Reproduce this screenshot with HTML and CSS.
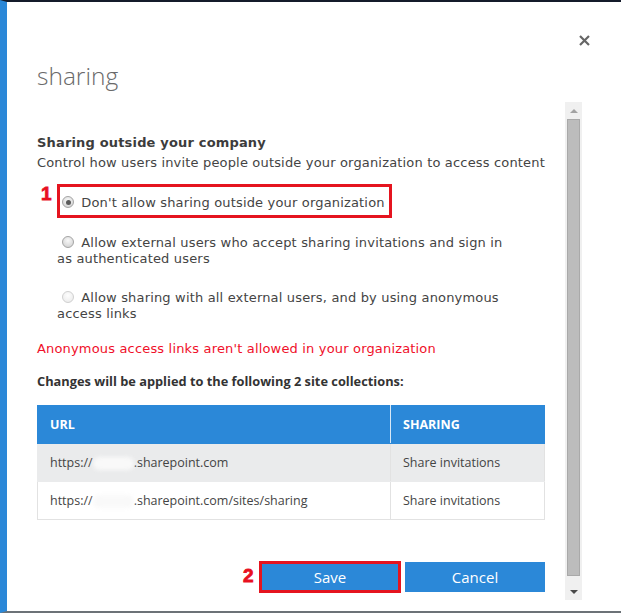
FILE: index.html
```html
<!DOCTYPE html>
<html lang="en">
<head>
<meta charset="utf-8">
<title>sharing</title>
<link rel="stylesheet" href="styles.css">
</head>
<body>
<div class="window">
  <div class="titlebar">
    <h1 class="title">sharing</h1>
    <button class="close" aria-label="Close">
      <svg width="11" height="11" viewBox="0 0 11 11"><path d="M1 1L10 10M10 1L1 10" stroke="#666" stroke-width="2.2" fill="none"/></svg>
    </button>
  </div>
  <div class="body">
    <div class="content">
      <h2 class="section-title">Sharing outside your company</h2>
      <p class="section-desc">Control how users invite people outside your organization to access content</p>

      <label class="option opt1">
        <span class="marker marker-1">1</span>
        <span class="highlight"></span>
        <span class="radio checked"></span> Don't allow sharing outside your organization
      </label>
      <label class="option opt2">
        <span class="radio"></span> Allow external users who accept sharing invitations and sign in as authenticated users
      </label>
      <label class="option opt3">
        <span class="radio disabled"></span> Allow sharing with all external users, and by using anonymous access links
      </label>

      <p class="error">Anonymous access links aren't allowed in your organization</p>
      <p class="changes">Changes will be applied to the following 2 site collections:</p>

      <table class="sites">
        <thead>
          <tr><th class="col-url">URL</th><th>SHARING</th></tr>
        </thead>
        <tbody>
          <tr class="alt"><td>https://<span class="blur"></span>.sharepoint.com</td><td>Share invitations</td></tr>
          <tr><td>https://<span class="blur"></span>.sharepoint.com/sites/sharing</td><td>Share invitations</td></tr>
        </tbody>
      </table>

      <div class="actions">
        <span class="save-wrap">
          <span class="marker marker-2">2</span>
          <button class="btn save">Save</button>
        </span>
        <button class="btn">Cancel</button>
      </div>
    </div>
    <div class="scrollbar">
      <div class="sb-btn"><span class="tri-up"></span></div>
      <div class="thumb"></div>
      <div class="sb-space"></div>
      <div class="sb-btn"><span class="tri-down"></span></div>
    </div>
  </div>
</div>
</body>
</html>
```
FILE: styles.css
```css
* { box-sizing: border-box; }
html, body { margin: 0; padding: 0; }
body {
  width: 621px;
  height: 613px;
  overflow: hidden;
  background: #fff;
  font-family: "DejaVu Sans", Verdana, sans-serif;
  color: #444;
}
.window {
  height: 613px;
  border-top: 2px solid #141b2a;
  border-left: 7px solid #2b88d8;
  border-bottom: 2px solid #6c7277;
  display: flex;
  flex-direction: column;
}
.titlebar {
  height: 100px;
  flex: none;
  display: flex;
  justify-content: space-between;
  align-items: flex-start;
  padding-left: 30px;
  padding-right: 27px;
}
.title {
  margin: 57px 0 0;
  font-family: "Open Sans", sans-serif;
  font-weight: 300;
  font-size: 24.5px;
  line-height: 34px;
  color: #6a6a6a;
}
.close {
  margin-top: 28px;
  width: 20px;
  height: 20px;
  padding: 0;
  border: 0;
  background: none;
  display: flex;
  align-items: center;
  justify-content: center;
}
.body {
  display: flex;
  flex: 1;
  align-items: flex-start;
}
.content {
  width: 538px;
  padding-left: 30px;
  padding-top: 32px;
  letter-spacing: 0.17px;
}
.section-title {
  margin: 0;
  font-size: 13px;
  font-weight: bold;
  line-height: 18px;
  color: #3c3c3c;
}
.section-desc {
  margin: 2px 0 0;
  font-size: 13px;
  line-height: 18px;
  white-space: nowrap;
}
.option {
  display: block;
  position: relative;
  margin-left: 20px;
  margin-right: 26px;
  font-size: 13px;
  line-height: 16px;
}
.opt1 { margin-top: 21px; }
.opt2 { margin-top: 22px; }
.opt3 { margin-top: 21px; }
.radio {
  display: inline-block;
  width: 12px;
  height: 12px;
  margin: 3px 3px 0 5px;
  vertical-align: -1px;
  border-radius: 50%;
  border: 1px solid #a4a4a4;
  background: radial-gradient(circle at 50% 35%, #f8f8f8 0%, #dedede 60%, #cbcbcb 100%);
  position: relative;
}
.radio.checked::after {
  content: "";
  position: absolute;
  left: 2.5px;
  top: 2.5px;
  width: 5px;
  height: 5px;
  border-radius: 50%;
  background: #5a5a5a;
}
.radio.disabled {
  border-color: #d0d0d0;
  background: radial-gradient(circle at 50% 35%, #fdfdfd 0%, #efefef 70%, #e6e6e6 100%);
}
.marker {
  position: absolute;
  font-family: "Liberation Sans", Arial, sans-serif;
  font-weight: bold;
  font-size: 19px;
  line-height: 20px;
  letter-spacing: 0;
  color: #e8101f;
  -webkit-text-stroke: 0.8px #e8101f;
}
.marker-1 { left: -16px; top: -9px; }
.highlight {
  position: absolute;
  left: 0;
  top: -9px;
  width: 335px;
  height: 34px;
  border: 3px solid #e5141f;
}
.error {
  margin: 19px 0 0;
  font-size: 13px;
  line-height: 16px;
  color: #f0102a;
}
.changes {
  margin: 16px 0 0;
  font-family: "Open Sans", sans-serif;
  font-weight: 700;
  font-size: 12.8px;
  letter-spacing: 0;
  line-height: 16px;
  color: #333;
}
.sites {
  margin-top: 16px;
  width: 508px;
  border-collapse: collapse;
  font-family: "Open Sans", sans-serif;
  font-size: 12.5px;
  letter-spacing: 0;
  color: #444;
}
.sites th {
  height: 38px;
  padding: 0 12px;
  background: #2b88d8;
  color: #fff;
  text-align: left;
  font-weight: 700;
  font-size: 12.5px;
  border: 1px solid #2b88d8;
}
.sites th.col-url {
  width: 353px;
  border-right: 1px solid #d8e8f6;
}
.sites td {
  height: 38px;
  padding: 0 12px;
  border: 1px solid #e2e2e2;
}
.sites tr.alt td {
  background: #eaebec;
  border-color: #eaebec;
  border-right-color: #e2e2e2;
}
.blur {
  display: inline-block;
  width: 41px;
  height: 13px;
  vertical-align: -3px;
  border-radius: 6px;
  background: #f9f9f9;
  filter: blur(2px);
}
.actions {
  display: flex;
  justify-content: flex-end;
  gap: 5px;
  margin-top: 42px;
  letter-spacing: 0;
}
.save-wrap { position: relative; display: flex; }
.marker-2 { left: -17px; top: 4px; }
.btn {
  width: 140px;
  height: 30px;
  border: 0;
  padding: 0;
  background: #2b88d8;
  color: #fff;
  font-family: "Open Sans", sans-serif;
  font-size: 15px;
}
.btn.save {
  outline: 3px solid #e5141f;
  outline-offset: -2px;
}
.scrollbar {
  margin-left: 20px;
  width: 17px;
  height: 498px;
  background: #f0f0f0;
  display: flex;
  flex-direction: column;
  align-items: center;
}
.sb-btn {
  height: 17px;
  width: 17px;
  display: flex;
  align-items: center;
  justify-content: center;
}
.tri-up {
  width: 0; height: 0;
  border-left: 4px solid transparent;
  border-right: 4px solid transparent;
  border-bottom: 4px solid #a3a3a3;
}
.tri-down {
  width: 0; height: 0;
  border-left: 4px solid transparent;
  border-right: 4px solid transparent;
  border-top: 4px solid #4a4a4a;
}
.thumb {
  width: 13px;
  height: 457px;
  background: #bcbcbc;
  border: 1px solid #a9a9a9;
}
.sb-space { flex: 1; }
```
